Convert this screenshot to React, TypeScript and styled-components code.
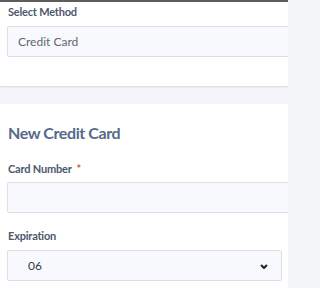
import React from "react";
import styled, { createGlobalStyle } from "styled-components";

const Global = createGlobalStyle`
  html, body { margin: 0; padding: 0; overflow: hidden; }
  body { background: #f4f5f8; font-family: "Lato", "Open Sans", sans-serif; }
`;

const Page = styled.div`
  border-top: 2px solid #5e5e5e;
  width: 288px;
  overflow: hidden;
`;

const Card = styled.section<{ $top: number; $bottom: number }>`
  background: #ffffff;
  padding: ${(p) => p.$top}px 0 ${(p) => p.$bottom}px 7px;
  box-shadow: 0 1px 2px rgba(0, 0, 0, 0.12);
  overflow: hidden;
`;

const Gap = styled.div`
  height: 18px;
`;

const Heading = styled.h2`
  margin: 0;
  font-size: 16px;
  line-height: 20px;
  font-weight: 700;
  letter-spacing: -0.4px;
  color: #56698a;
  padding-left: 1px;
`;

const Label = styled.label<{ $mt: number }>`
  display: block;
  margin-top: ${(p) => p.$mt}px;
  padding-left: 1px;
  font-size: 11px;
  line-height: 16px;
  font-weight: 700;
  letter-spacing: -0.2px;
  color: #4d596b;
`;

const Required = styled.span`
  color: #d9534f;
  margin-left: 5px;
`;

const Input = styled.input<{ $mt: number }>`
  display: block;
  box-sizing: border-box;
  margin-top: ${(p) => p.$mt}px;
  width: 310px;
  height: 31px;
  padding: 0 10px;
  border: 1px solid #dcdfe6;
  border-radius: 2px;
  background: #f8f9fc;
  font-family: "Lato", "Open Sans", sans-serif;
  font-size: 12px;
  color: #5c6778;
  outline: none;
`;

const SelectWrap = styled.div`
  position: relative;
  margin-top: 6px;
  width: 275px;
`;

const Select = styled.select`
  display: block;
  box-sizing: border-box;
  width: 100%;
  height: 31px;
  padding: 0 20px;
  appearance: none;
  border: 1px solid #dcdfe6;
  border-radius: 2px;
  background: #f8f9fc;
  font-family: "Lato", "Open Sans", sans-serif;
  font-size: 12px;
  color: #333a45;
  outline: none;
`;

const Chevron = styled.svg`
  position: absolute;
  right: 14px;
  top: 14px;
  width: 8px;
  height: 5px;
  pointer-events: none;
`;

export default function App() {
  return (
    <Page>
      <Global />
      <Card $top={2} $bottom={29}>
        <Label $mt={0}>Select Method</Label>
        <Input $mt={6} defaultValue="Credit Card" readOnly />
      </Card>
      <Gap />
      <Card $top={19} $bottom={10}>
        <Heading>New Credit Card</Heading>
        <Label $mt={18}>
          Card Number<Required>*</Required>
        </Label>
        <Input $mt={5} defaultValue="" />
        <Label $mt={15}>Expiration</Label>
        <SelectWrap>
          <Select defaultValue="06">
            <option value="06">06</option>
          </Select>
          <Chevron viewBox="0 0 8 5">
            <path d="M1 1 L4 4 L7 1" fill="none" stroke="#222" strokeWidth="2" />
          </Chevron>
        </SelectWrap>
      </Card>
    </Page>
  );
}
